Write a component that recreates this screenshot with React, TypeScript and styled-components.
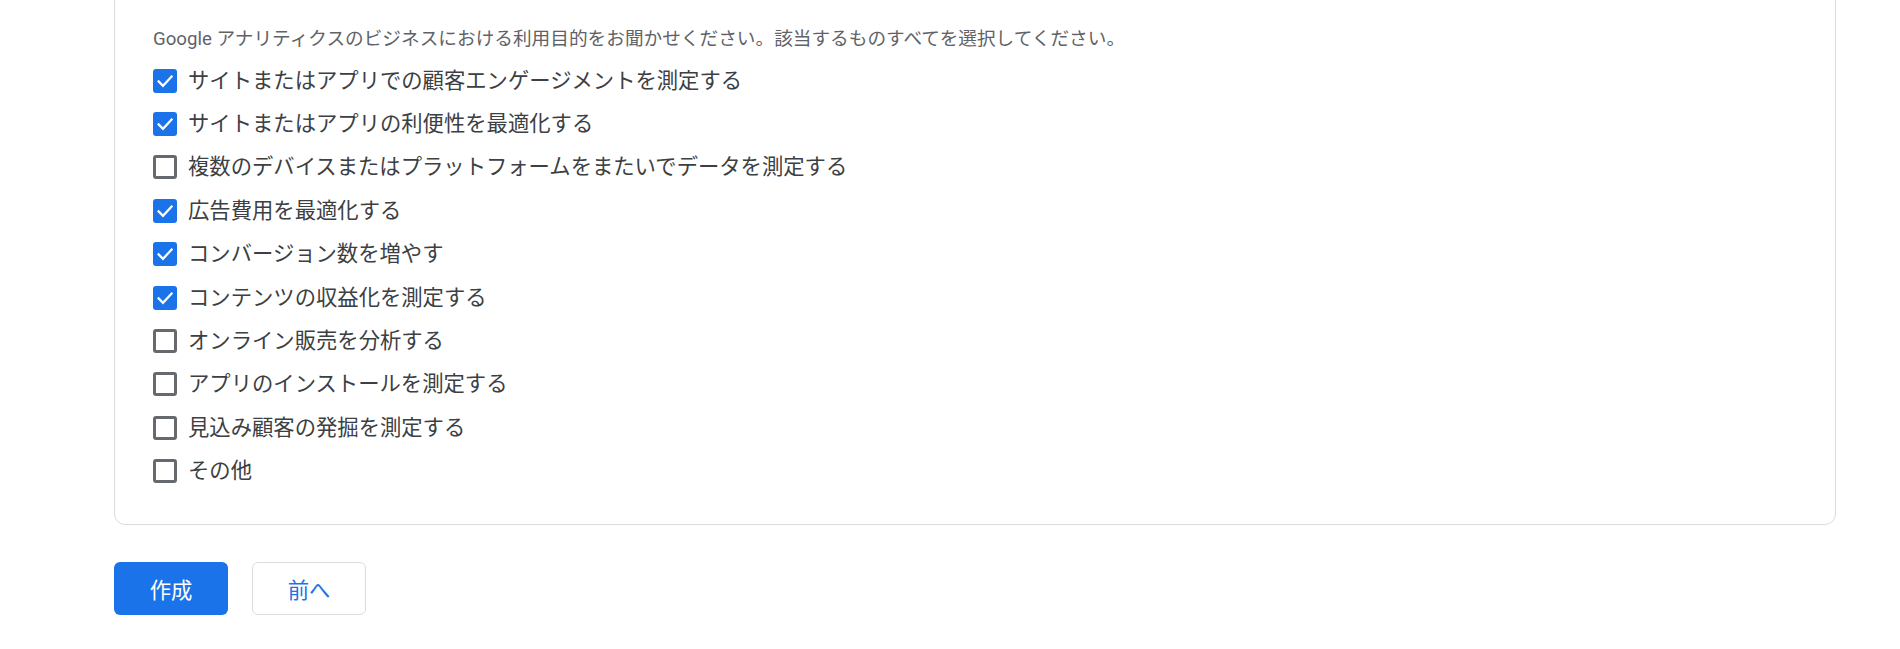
import React from 'react';
import styled, { createGlobalStyle } from 'styled-components';

const GlobalStyle = createGlobalStyle`
  html, body {
    margin: 0;
    padding: 0;
    background: #ffffff;
    overflow: hidden;
  }
  body {
    font-family: Roboto, "Noto Sans CJK JP", sans-serif;
  }
`;

const Page = styled.div`
  width: 1900px;
  height: 649px;
  overflow: hidden;
  padding-left: 114px;
  box-sizing: border-box;
`;

const Card = styled.section`
  width: 1722px;
  margin-top: -40px;
  padding: 64px 38px 31px 38px;
  box-sizing: border-box;
  border: 1px solid #dadce0;
  border-radius: 11px;
  background: #ffffff;
`;

const Description = styled.p`
  margin: 0 0 6px 0;
  font-size: 18.67px;
  line-height: 28px;
  color: #5f6368;
`;

const OptionList = styled.ul`
  list-style: none;
  margin: 0;
  padding: 0;
  display: flex;
  flex-direction: column;
`;

const OptionRow = styled.li`
  display: flex;
  align-items: center;
  gap: 11px;
  height: 43.4px;
`;

const BoxFrame = styled.span<{ $checked: boolean }>`
  width: 24px;
  height: 24px;
  flex: 0 0 24px;
  box-sizing: border-box;
  border-radius: 3px;
  display: flex;
  align-items: center;
  justify-content: center;
  background: ${(p) => (p.$checked ? '#1a73e8' : 'transparent')};
  border: ${(p) => (p.$checked ? 'none' : '3px solid #666a6e')};
`;

const OptionLabel = styled.span`
  font-size: 21.33px;
  line-height: 28px;
  color: #3c4043;
`;

const Actions = styled.div`
  display: flex;
  gap: 24px;
  margin-top: 37px;
`;

const Button = styled.button<{ $primary?: boolean }>`
  width: 114px;
  height: 53px;
  box-sizing: border-box;
  border-radius: 6px;
  font-family: Roboto, "Noto Sans CJK JP", sans-serif;
  font-size: 21.33px;
  font-weight: 400;
  cursor: pointer;
  background: ${(p) => (p.$primary ? '#1a73e8' : '#ffffff')};
  color: ${(p) => (p.$primary ? '#ffffff' : '#1a73e8')};
  border: ${(p) => (p.$primary ? 'none' : '1px solid #dadce0')};
`;

const options: { label: string; checked: boolean }[] = [
  { label: 'サイトまたはアプリでの顧客エンゲージメントを測定する', checked: true },
  { label: 'サイトまたはアプリの利便性を最適化する', checked: true },
  { label: '複数のデバイスまたはプラットフォームをまたいでデータを測定する', checked: false },
  { label: '広告費用を最適化する', checked: true },
  { label: 'コンバージョン数を増やす', checked: true },
  { label: 'コンテンツの収益化を測定する', checked: true },
  { label: 'オンライン販売を分析する', checked: false },
  { label: 'アプリのインストールを測定する', checked: false },
  { label: '見込み顧客の発掘を測定する', checked: false },
  { label: 'その他', checked: false },
];

const Checkbox: React.FC<{ checked: boolean }> = ({ checked }) => (
  <BoxFrame $checked={checked}>
    {checked && (
      <svg width="24" height="24" viewBox="0 0 24 24">
        <polyline
          points="5.6,12.4 10,16.8 18.6,7.6"
          fill="none"
          stroke="#ffffff"
          strokeWidth="2.2"
          strokeLinecap="square"
        />
      </svg>
    )}
  </BoxFrame>
);

export default function App() {
  return (
    <Page>
      <GlobalStyle />
      <Card>
        <Description>
          Google アナリティクスのビジネスにおける利用目的をお聞かせください。該当するものすべてを選択してください。
        </Description>
        <OptionList>
          {options.map((o) => (
            <OptionRow key={o.label}>
              <Checkbox checked={o.checked} />
              <OptionLabel>{o.label}</OptionLabel>
            </OptionRow>
          ))}
        </OptionList>
      </Card>
      <Actions>
        <Button $primary>作成</Button>
        <Button>前へ</Button>
      </Actions>
    </Page>
  );
}
